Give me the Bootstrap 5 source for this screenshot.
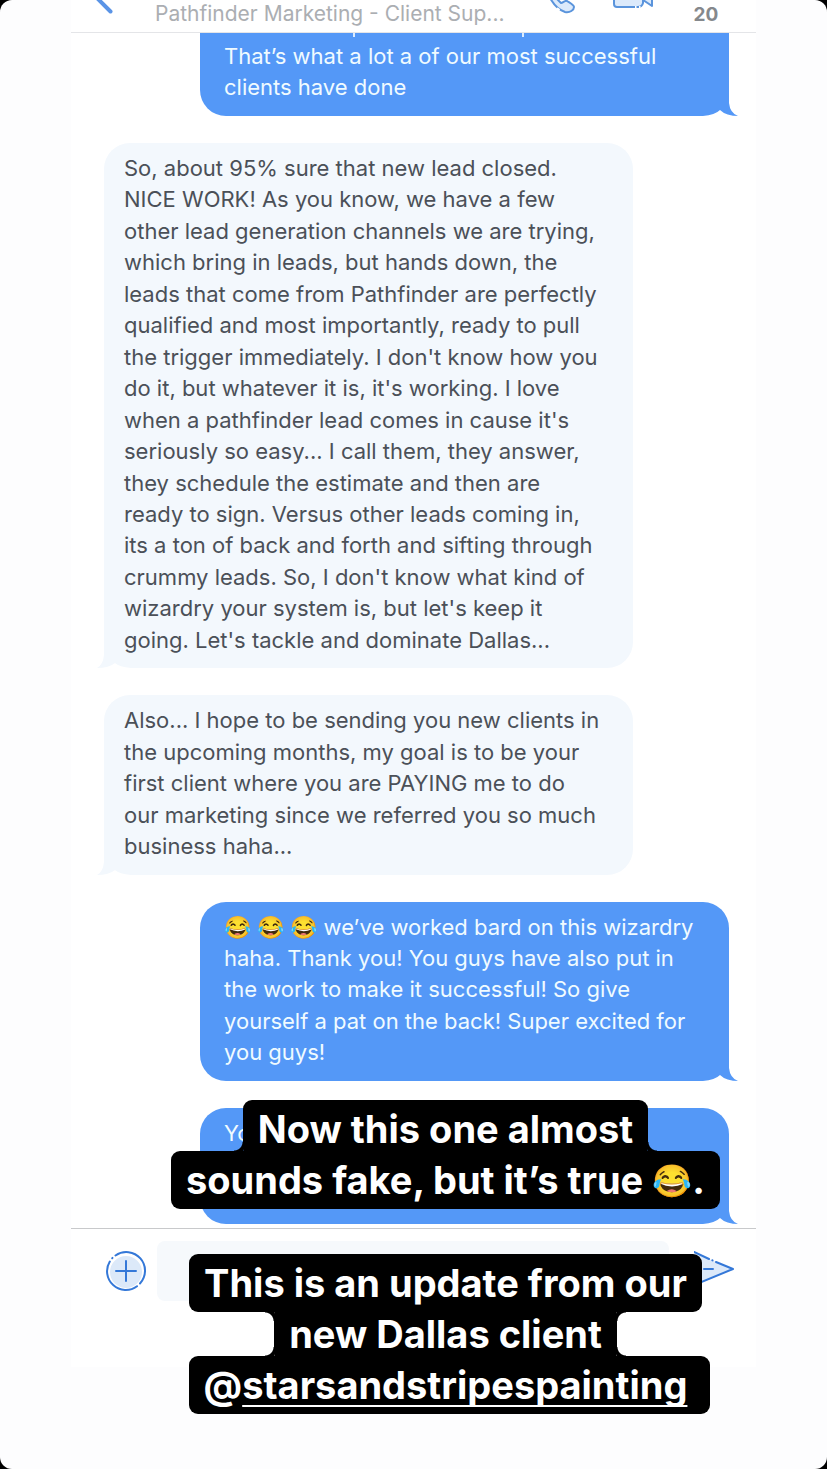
<!DOCTYPE html>
<html lang="en">
<head>
<meta charset="utf-8">
<meta name="viewport" content="width=device-width, initial-scale=1">
<title>Pathfinder Marketing chat</title>
<link href="https://cdn.jsdelivr.net/npm/bootstrap@5.3.0/dist/css/bootstrap.min.css" rel="stylesheet">
<style>
  body { background: #000; font-family: Inter, "Liberation Sans", sans-serif; }
  .story { min-height: 100vh; background: #fdfdfe; border-radius: 12px; }
  .phone { max-width: 685px; background: #fff; }
  .topbar { height: 33px; border-bottom: 1px solid #e4e5e8; color: #abaeb2; }
  .topbar button, .composer button { line-height: 0; }
  .topbar h1 { font-size: 21px; line-height: 28px; }
  .back { margin-left: 24px; width: 60px; }
  .call { margin-left: 40px; width: 64px; }
  .video { width: 85px; }
  .unread { font-size: 19px; line-height: 29px; color: #85888c; }
  .messages { gap: 27px; }
  .bubble {
    width: 529px; border-radius: 26px; padding: 10px 0 12px 20px;
    font-size: 22px; line-height: 1.43; white-space: nowrap;
  }
  .received { background: #f3f8fd; color: #4b5058; margin-left: 33px; border-bottom-left-radius: 0; }
  .sent { background: #5498f7; color: #f0fbff; margin-right: 27px; padding-left: 24px; border-bottom-right-radius: 0; }
  .cut { height: 83px; padding-top: 8px; border-radius: 0 0 0 26px; }
  .tail { width: 40px; height: 22px; bottom: -1px; }
  .sent .tail { right: -10px; }
  .received .tail { left: -7px; }
  .descender { width: 2px; height: 4px; background: #dcecff; top: 0; left: 153px; }
  .descender + .descender { left: 322px; }
  .composer { border-top: 1px solid #c8c9cb; padding: 12px 22px 66px 35px; }
  .composer input { height: 60px; background: #f6f9fc; border-radius: 8px; margin-left: 11px; margin-right: 25px; }
  .captions { top: 1100px; left: 64px; gap: 45px; }
  .strip {
    background: #000; color: #fff; border-radius: 9px; padding: 0 15px; height: 58px;
    font-size: 38px; font-weight: 700; line-height: 58px; white-space: nowrap;
  }
  .strip + .strip { margin-top: -7px; }
  .strip a { color: #fff; text-underline-offset: 6px; text-decoration-thickness: 2px; text-decoration-skip-ink: none; }
  .emoji { font-size: 32px; line-height: 1; vertical-align: 2px; }
  .handle { padding-right: 23px; margin-left: 8px; }
  .fillet-top::before, .fillet-top::after, .fillet-bottom i::before, .fillet-bottom i::after {
    content: ""; position: absolute; width: 9px; height: 9px;
  }
  .fillet-bottom i::before, .fillet-bottom i::after { bottom: 7px; }
  .fillet-bottom i::before { left: -9px; background: radial-gradient(circle at 0 0, transparent 8px, #000 9px); }
  .fillet-bottom i::after { right: -9px; background: radial-gradient(circle at 100% 0, transparent 8px, #000 9px); }
  .fillet-top::before, .fillet-top::after { top: 7px; }
  .fillet-top::before { left: -9px; background: radial-gradient(circle at 0 100%, transparent 8px, #000 9px); }
  .fillet-top::after { right: -9px; background: radial-gradient(circle at 100% 100%, transparent 8px, #000 9px); }
</style>
</head>
<body>
<main class="story position-relative overflow-hidden">
  <div class="phone mx-auto">
    <header class="topbar d-flex align-items-start overflow-hidden">
      <button class="back btn border-0 p-0 text-start" aria-label="Back">
        <svg width="20" height="16" fill="none" stroke="#5a94e6" stroke-width="4" stroke-linecap="round"><path d="M-2-6 15.500 11.500"/></svg>
      </button>
      <h1 class="fw-normal mb-0">Pathfinder Marketing - Client Sup...</h1>
      <button class="call btn border-0 p-0 text-start" aria-label="Call">
        <svg width="34" height="16" fill="#dceafb" stroke="#5a94dc" stroke-width="2" stroke-linecap="round" stroke-linejoin="round"><path d="M4-4C8 4 14 10 20 12c5 1 9-2 9-5 0-2-4-4-7-6-2-1-4 2-6 2L9-4"/><path d="M12.500 8.500l1.500 1" stroke="#fff"/></svg>
      </button>
      <button class="video btn border-0 p-0 text-start" aria-label="Video call">
        <svg width="48" height="12" fill="#dceafb" stroke="#5a94dc" stroke-width="2" stroke-linejoin="round"><path d="M5-4V4q0 3 3 3H29q4 0 5-4V-4"/><path d="M34 0l9 6V-5"/><path d="M26 7h1.500M30 7h1.500" stroke="#fff"/></svg>
      </button>
      <span class="unread fw-bold">20</span>
    </header>

    <section class="messages d-flex flex-column" aria-label="Messages">
      <div class="bubble sent cut position-relative align-self-end">
        <span class="descender position-absolute"></span><span class="descender position-absolute"></span>
        That’s what a lot a of our most successful<br>clients have done
        <svg class="tail position-absolute" viewBox="0 0 40 22"><path fill="#5498f7" d="M29 8H30Q31 18 39 21H29Z"/><path fill="#fff" d="M4 21Q16 20 21 15Q27 21 40 21V23H4Z"/></svg>
      </div>

      <div class="bubble received position-relative">
        So, about 95% sure that new lead closed.<br>
        NICE WORK! As you know, we have a few<br>
        other lead generation channels we are trying,<br>
        which bring in leads, but hands down, the<br>
        leads that come from Pathfinder are perfectly<br>
        qualified and most importantly, ready to pull<br>
        the trigger immediately. I don't know how you<br>
        do it, but whatever it is, it's working. I love<br>
        when a pathfinder lead comes in cause it's<br>
        seriously so easy... I call them, they answer,<br>
        they schedule the estimate and then are<br>
        ready to sign. Versus other leads coming in,<br>
        its a ton of back and forth and sifting through<br>
        crummy leads. So, I don't know what kind of<br>
        wizardry your system is, but let's keep it<br>
        going. Let's tackle and dominate Dallas...
        <svg class="tail position-absolute" viewBox="0 0 40 22"><path fill="#f3f8fd" d="M8 8H7Q6 18 0 21H8Z"/><path fill="#fff" d="M34 21Q22 20 18 16Q12 21 0 21V23H34Z"/></svg>
      </div>

      <div class="bubble received position-relative">
        Also... I hope to be sending you new clients in<br>
        the upcoming months, my goal is to be your<br>
        first client where you are PAYING me to do<br>
        our marketing since we referred you so much<br>
        business haha...
        <svg class="tail position-absolute" viewBox="0 0 40 22"><path fill="#f3f8fd" d="M8 8H7Q6 18 0 21H8Z"/><path fill="#fff" d="M34 21Q22 20 18 16Q12 21 0 21V23H34Z"/></svg>
      </div>

      <div class="bubble sent position-relative align-self-end">
        😂 😂 😂 we’ve worked bard on this wizardry<br>
        haha. Thank you! You guys have also put in<br>
        the work to make it successful! So give<br>
        yourself a pat on the back! Super excited for<br>
        you guys!
        <svg class="tail position-absolute" viewBox="0 0 40 22"><path fill="#5498f7" d="M29 8H30Q31 18 39 21H29Z"/><path fill="#fff" d="M4 21Q16 20 21 15Q27 21 40 21V23H4Z"/></svg>
      </div>

      <div class="bubble sent position-relative align-self-end">
        Yo<br><br><br>
        <svg class="tail position-absolute" viewBox="0 0 40 22"><path fill="#5498f7" d="M29 8H30Q31 18 39 21H29Z"/><path fill="#fff" d="M4 21Q16 20 21 15Q27 21 40 21V23H4Z"/></svg>
      </div>
    </section>

    <form class="composer d-flex align-items-center mt-1">
      <button type="button" class="btn border-0 p-0" aria-label="Add attachment">
        <svg width="40" height="40" viewBox="0 0 40 40" fill="none" stroke="#3478d8" stroke-width="2" stroke-linecap="round"><circle cx="20" cy="21" r="16" fill="#dce9f9" stroke="none"/><path d="M9.500 4.500A18.700 18.700 0 0 1 34 32.500M31 35.200A18.700 18.700 0 0 1 3.800 10.500"/><path d="M6.200 7.200l.3-.3"/><path d="M20 10v20M10 20h20"/></svg>
      </button>
      <input type="text" class="form-control border-0 shadow-none" aria-label="Message">
      <button type="submit" class="btn border-0 p-0" aria-label="Send">
        <svg width="40" height="40" viewBox="0 0 40 40" fill="none" stroke="#3478d8" stroke-width="2" stroke-linecap="round" stroke-linejoin="round"><path d="M0 2 39 18 0 35Z" fill="#dce9f9" stroke="none"/><path d="M0 1 15 8M22 11 39 18 0 34"/><path d="M18.300 9.300l.3.100"/><path d="M0 18h7M10 18h9"/></svg>
      </button>
    </form>
  </div>

  <aside class="captions position-absolute end-0 d-flex flex-column">
    <div class="d-flex flex-column align-items-center">
      <span class="strip fillet-bottom position-relative">Now this one almost<i></i></span>
      <span class="strip position-relative">sounds fake, but it’s true <span class="emoji">😂</span>.</span>
    </div>
    <div class="d-flex flex-column align-items-center">
      <span class="strip position-relative">This is an update from our</span>
      <span class="strip fillet-top fillet-bottom position-relative">new Dallas client<i></i></span>
      <span class="strip handle position-relative">@<a href="#">starsandstripespainting</a></span>
    </div>
  </aside>
</main>
<script src="https://cdn.jsdelivr.net/npm/bootstrap@5.3.0/dist/js/bootstrap.bundle.min.js"></script>
</body>
</html>
